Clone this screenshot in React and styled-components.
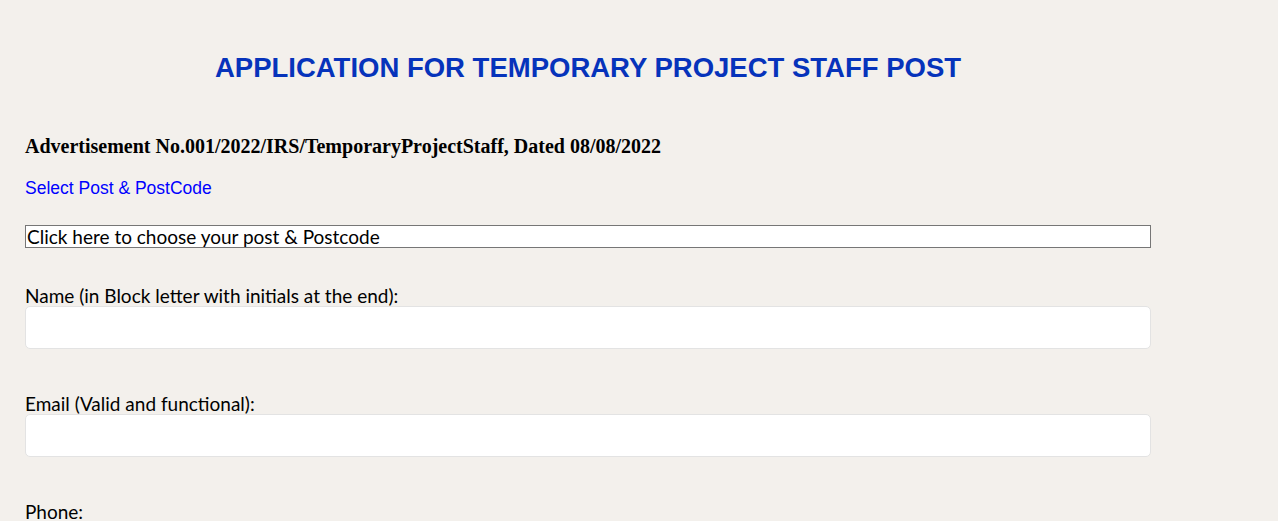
import styled, { createGlobalStyle } from 'styled-components'

const GlobalStyle = createGlobalStyle`
    body {
        margin: 0;
        background-color: #f3f0ec;
        font-family: Lato, "Noto Sans", sans-serif;
    }
`

const FormWrapper = styled.form`
    width: 1126px;
    margin-left: 25px;
    padding-top: 52px;
`

const FormTitle = styled.h2`
    margin: 0 0 51px;
    text-align: center;
    font-family: "Liberation Sans", Arial, sans-serif;
    font-size: 27.5px;
    font-weight: bold;
    color: #0633bb;
`

const AdvertLine = styled.h3`
    margin: 0 0 20px;
    font-family: "Liberation Serif", "Times New Roman", serif;
    font-size: 20px;
    line-height: 23px;
    font-weight: bold;
    color: #000;
`

const PostLabel = styled.p`
    margin: 0 0 27px;
    font-family: "Liberation Sans", Arial, sans-serif;
    font-size: 17.5px;
    line-height: 20px;
    color: #0000ff;
`

const PostSelect = styled.div`
    box-sizing: border-box;
    height: 23px;
    border: 1px solid #767676;
    background-color: #fff;
    font-size: 19px;
    line-height: 21px;
    padding-left: 1px;
    color: #000;
    margin-bottom: 38px;
`

const Field = styled.div`
    margin-bottom: 45px;
`

const FieldLabel = styled.label`
    display: block;
    font-size: 19px;
    line-height: 20px;
    color: #000;
`

const TextInput = styled.input`
    display: block;
    box-sizing: border-box;
    width: 100%;
    height: 43px;
    border: 1px solid #e3e3e3;
    border-radius: 5px;
    background-color: #fff;
    outline: none;
`

export default function App() {
    return (
        <>
            <GlobalStyle />
            <FormWrapper>
                <FormTitle>APPLICATION FOR TEMPORARY PROJECT STAFF POST</FormTitle>
                <AdvertLine>
                    Advertisement No.001/2022/IRS/TemporaryProjectStaff, Dated 08/08/2022
                </AdvertLine>
                <PostLabel>Select Post &amp; PostCode</PostLabel>
                <PostSelect>Click here to choose your post &amp; Postcode</PostSelect>
                <Field>
                    <FieldLabel>Name (in Block letter with initials at the end):</FieldLabel>
                    <TextInput type="text" />
                </Field>
                <Field>
                    <FieldLabel>Email (Valid and functional):</FieldLabel>
                    <TextInput type="email" />
                </Field>
                <Field>
                    <FieldLabel>Phone:</FieldLabel>
                    <TextInput type="tel" />
                </Field>
            </FormWrapper>
        </>
    )
}
